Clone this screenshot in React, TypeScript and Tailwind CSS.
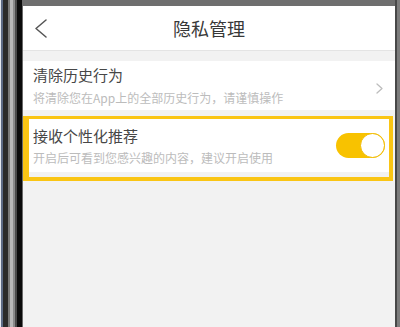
import { useState } from "react";

const bezelLeft = [
  { w: "w-[1px]", c: "bg-[#e3e7ef]" },
  { w: "w-[2px]", c: "bg-[#5c6a85]" },
  { w: "w-[5px]", c: "bg-[#2a2a2a]" },
  { w: "w-[2px]", c: "bg-[#7a7a7a]" },
  { w: "w-[3px]", c: "bg-[#b8b8b8]" },
  { w: "w-[2px]", c: "bg-[#8a8a8a]" },
  { w: "w-[2px]", c: "bg-[#4a4a4a]" },
  { w: "w-[5px]", c: "bg-[#0b0b0b]" },
  { w: "w-[1px]", c: "bg-[#6a6a6a]" }
];

function Toggle({ on, onChange }: { on: boolean; onChange: () => void }) {
  return (
    <button
      type="button"
      onClick={onChange}
      className={`flex h-[25px] w-[49px] shrink-0 items-center rounded-full p-0 transition ${
        on ? "justify-end bg-[#f8c200]" : "justify-start bg-[#dcdcdc]"
      }`}
    >
      <span className="h-[25px] w-[25px] rounded-full border-[1.5px] border-[#f1bb00] bg-white" />
    </button>
  );
}

export default function App() {
  const [recommend, setRecommend] = useState(true);

  return (
    <div
      className="flex h-[327px] w-[400px] overflow-hidden bg-black"
      style={{ fontFamily: '"Noto Sans CJK SC", "Noto Sans", sans-serif' }}
    >
      <div className="flex h-full shrink-0">
        {bezelLeft.map((s, i) => (
          <div key={i} className={`h-full ${s.w} ${s.c}`} />
        ))}
      </div>

      <div className="flex min-w-0 flex-1 flex-col bg-[#f2f2f2]">
        <div className="h-[6px] bg-[#6e6e6e]" />

        <header className="relative flex h-[45px] items-center justify-center border-b border-[#e4e4e4] bg-white">
          <svg
            className="absolute left-[11px] top-[13px]"
            width="14"
            height="19"
            viewBox="0 0 14 19"
            fill="none"
          >
            <polyline
              points="12,1 2,9.5 12,18"
              stroke="#555"
              strokeWidth="1.5"
              strokeLinecap="round"
              strokeLinejoin="round"
            />
          </svg>
          <h1 className="text-[18px] leading-none text-[#383838]">隐私管理</h1>
        </header>

        <div className="h-[10px]" />

        <div className="flex h-[49px] items-center bg-white pl-[10px] pr-[12px]">
          <div className="min-w-0 flex-1">
            <p className="text-[15px] leading-[18px] text-[#474747]">清除历史行为</p>
            <p className="mt-[7px] text-[12px] leading-[14px] text-[#bcbcbc]">
              将清除您在App上的全部历史行为，请谨慎操作
            </p>
          </div>
          <svg width="7" height="11" viewBox="0 0 7 11" fill="none" className="mt-[6px]">
            <polyline
              points="1,1 6,5.5 1,10"
              stroke="#bdbdbd"
              strokeWidth="1.3"
              strokeLinecap="round"
              strokeLinejoin="round"
            />
          </svg>
        </div>

        <div className="h-[6px]" />

        <div className="mr-[2px] flex h-[65px] flex-col border-b-[4px] border-l-[6px] border-r-[4px] border-t-[3px] border-[#fac514]">
          <div className="flex h-[53px] items-center bg-white pl-[4px] pr-[4px]">
            <div className="min-w-0 flex-1">
              <p className="text-[15px] leading-[18px] text-[#474747]">接收个性化推荐</p>
              <p className="mt-[6px] text-[12px] leading-[14px] text-[#bcbcbc]">
                开启后可看到您感兴趣的内容，建议开启使用
              </p>
            </div>
            <Toggle on={recommend} onChange={() => setRecommend(!recommend)} />
          </div>
        </div>

        <div className="flex-1" />
      </div>

      <div className="flex h-full shrink-0">
        <div className="h-full w-[2px] bg-[#484848]" />
        <div className="h-full w-[3px] bg-[#7c7c7c]" />
      </div>
    </div>
  );
}
